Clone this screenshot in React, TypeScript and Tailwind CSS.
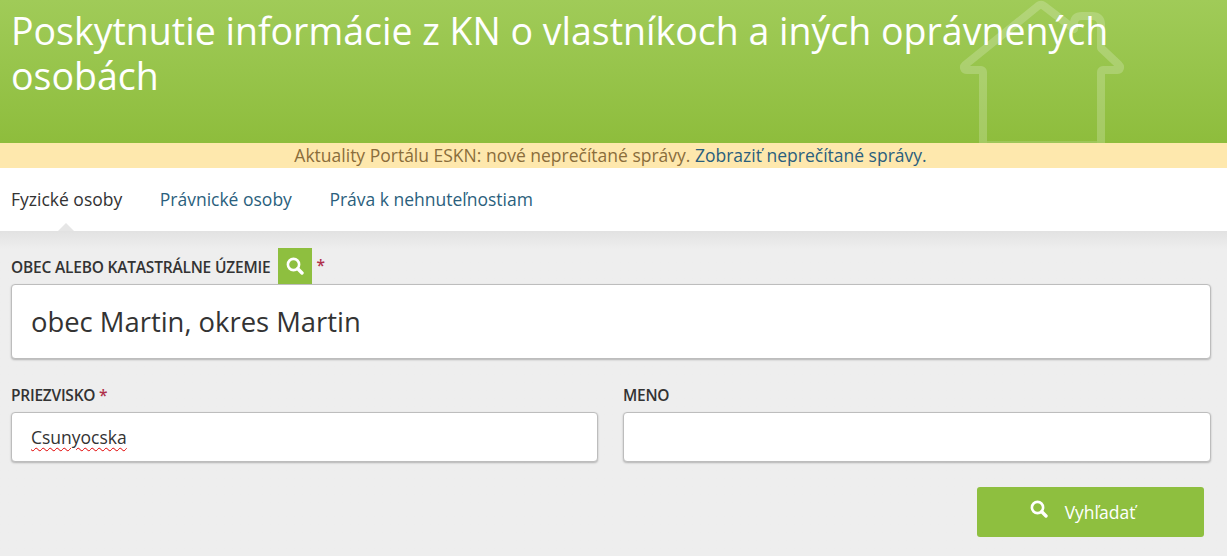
const font = { fontFamily: '"Open Sans", sans-serif' }

function SearchIcon({ className }: { className: string }) {
  return (
    <svg className={className} viewBox="0 0 18 18" fill="none" stroke="currentColor">
      <circle cx="7.5" cy="7.5" r="5.6" strokeWidth="2.6" />
      <path d="M11.8 11.8L16 16" strokeWidth="3.4" strokeLinecap="round" />
    </svg>
  )
}

function House() {
  return (
    <svg className="absolute left-[955px] top-0 h-[143px] w-[175px]" viewBox="0 0 175 143" fill="none">
      <path
        d="M28 143V72a2 2 0 0 0-2-2H12c-3 0-4-3-2-5L83 6a5 5 0 0 1 6 0l30 23V24c0-6 3-8 8-8h10c6 0 9 3 9 8v24L164 65c2 2 1 5-2 5H148a2 2 0 0 0-2 2v71"
        stroke="#ffffff"
        strokeOpacity="0.2"
        strokeWidth="8"
        strokeLinejoin="round"
      />
      <path d="M32 142H142" stroke="#ffffff" strokeOpacity="0.15" strokeWidth="2" />
    </svg>
  )
}

export default function App() {
  return (
    <div className="flex h-[556px] w-[1227px] flex-col overflow-hidden bg-[#eeeeee] text-[#333333]" style={font}>
      <header className="relative h-[143px] bg-gradient-to-b from-[#a0cb58] to-[#8ebd3c] px-[11px] pt-[8px]">
        <House />
        <h1 className="relative text-[37.5px] leading-[45px] font-normal text-white">
          Poskytnutie informácie z KN o vlastníkoch a iných oprávnených osobách
        </h1>
      </header>

      <div className="h-[25px] bg-[#fee8ad] pr-[6px] text-center text-[17.5px] leading-[25px] text-[#8a6d3b]">
        Aktuality Portálu ESKN: nové neprečítané správy. <a className="text-[#2b5f7d]">Zobraziť neprečítané správy.</a>
      </div>

      <nav className="relative flex h-[63px] items-center gap-[37.5px] bg-white px-[11px] text-[17.5px]">
        <a className="relative text-[#333333]">Fyzické osoby</a>
        <a className="text-[#2b5f7d]">Právnické osoby</a>
        <a className="text-[#2b5f7d]">Práva k nehnuteľnostiam</a>
        <span className="absolute bottom-0 left-[58px] h-0 w-0 border-x-[8px] border-b-[8px] border-x-transparent border-b-[#e6e6e6]" />
      </nav>

      <main className="flex-1 bg-gradient-to-b from-[#e2e2e2] to-[#eeeeee] to-[18px] px-[11px] pr-[16px]">
        <div className="mt-[17px] flex h-[36px] items-center text-[15.5px] font-semibold tracking-[-0.2px] text-[#333333]">
          <span className="pt-[3px]">OBEC ALEBO KATASTRÁLNE ÚZEMIE</span>
          <span className="ml-[8px] flex h-[36px] w-[34px] items-center justify-center bg-[#8ebf3f] text-white">
            <SearchIcon className="h-[18px] w-[18px]" />
          </span>
          <span className="ml-[4px] text-[#b0304a]">*</span>
        </div>

        <div className="flex h-[75px] items-center rounded-[4px] border border-[#bdbdbd] bg-white px-[19px] text-[27.4px] shadow-[0_1px_2px_rgba(0,0,0,0.25)]">
          obec Martin, okres Martin
        </div>

        <div className="mt-[25px] grid grid-cols-[587px_1fr] gap-x-[25px]">
          <div>
            <div className="h-[28px] text-[15.5px] leading-[23px] font-semibold tracking-[-0.25px]">
              PRIEZVISKO <span className="text-[#b0304a]">*</span>
            </div>
            <div className="flex h-[50px] items-center rounded-[4px] border border-[#bdbdbd] bg-white px-[19px] text-[17.5px] shadow-[0_1px_2px_rgba(0,0,0,0.25)]">
              <span className="underline decoration-[#e00000] decoration-wavy decoration-1 underline-offset-[3px]">Csunyocska</span>
            </div>
          </div>
          <div>
            <div className="h-[28px] text-[15.5px] leading-[23px] font-semibold tracking-[-0.25px]">MENO</div>
            <div className="h-[50px] rounded-[4px] border border-[#bdbdbd] bg-white shadow-[0_1px_2px_rgba(0,0,0,0.25)]" />
          </div>
        </div>

        <div className="mt-[25px] flex justify-end pr-[7px]">
          <button className="flex h-[50px] w-[227px] items-center justify-center gap-[17px] rounded-[3px] bg-[#8ebf3f] pr-[16px] text-[17.5px] text-white">
            <SearchIcon className="-mt-[6px] h-[18px] w-[18px]" />
            Vyhľadať
          </button>
        </div>
      </main>
    </div>
  )
}
